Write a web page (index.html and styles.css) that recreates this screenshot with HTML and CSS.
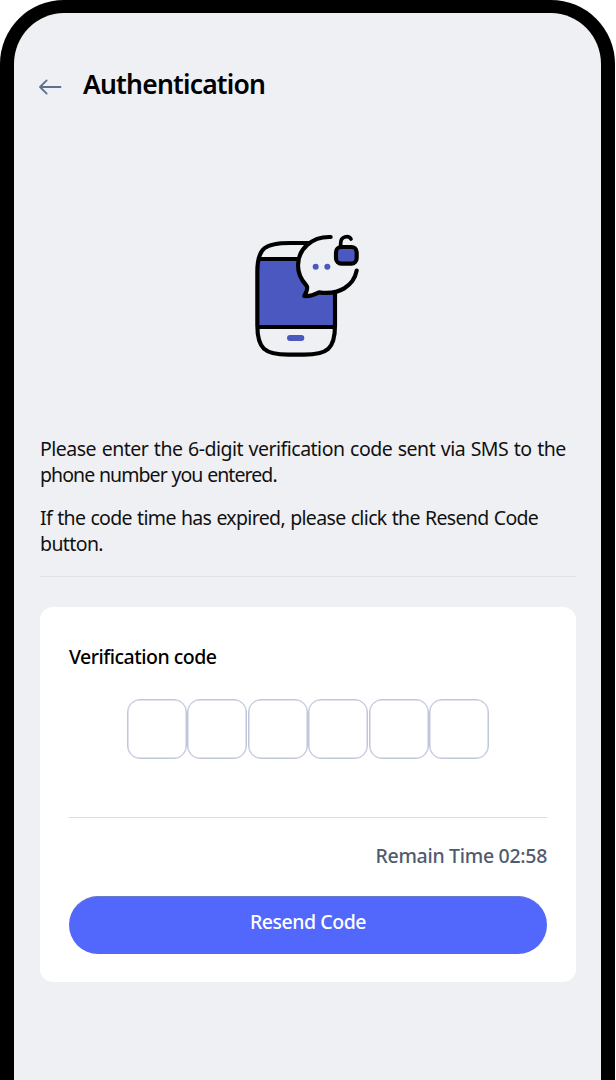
FILE: index.html
```html
<!DOCTYPE html>
<html lang="en">
<head>
<meta charset="utf-8">
<title>Authentication</title>
<link rel="stylesheet" href="styles.css">
</head>
<body>
<main class="phone">
  <header class="header">
    <svg class="back" viewBox="0 0 24 18" fill="none"><path d="M22.5 9H2M8.7 2.4L2 9l6.7 6.6"/></svg>
    <h1 class="title">Authentication</h1>
  </header>
  <svg class="art" viewBox="0 0 420 450" fill="none">
    <path class="screen" d="M52 117H286V321H52z"/>
    <path class="line" d="M212 69H150C76 69 52 82 52 156V316C52 386 74 404 145 404H192C263 404 285 386 285 316V214M58 117H180M56 321H281"/>
    <path class="bubble" d="M272 51C215 49 174 88 174 136C174 164 185 181 198 195C208 206 197 217 193 228C209 230 223 224 237 217C297 226 341 198 350 152L350 100L290 51Z"/>
    <path class="line" d="M272 51C215 49 174 88 174 136C174 164 185 181 198 195C208 206 197 217 193 228C209 230 223 224 237 217C297 226 341 198 350 152"/>
    <rect class="lock" x="288" y="81" width="62" height="50" rx="16"/>
    <path class="shackle" d="M302 80V70C302 49 325 45 333 57"/>
    <circle class="dot" cx="227" cy="140" r="9"/>
    <circle class="dot" cx="262" cy="140" r="9"/>
    <rect class="dot" x="141" y="345" width="52" height="18" rx="9"/>
  </svg>
  <section class="intro">
    <p class="para"><span class="wide">Please enter the 6-digit verification code sent via SMS to the</span><br><span class="tight">phone number you entered.</span></p>
    <p class="para"><span class="even">If the code time has expired, please click the Resend Code</span><br>button.</p>
  </section>
  <section class="card">
    <h2 class="label">Verification code</h2>
    <div class="code"><i class="cell"></i><i class="cell"></i><i class="cell"></i><i class="cell"></i><i class="cell"></i><i class="cell"></i></div>
    <div class="remain"><span>Remain Time 02:58</span></div>
    <button class="resend">Resend Code</button>
  </section>
</main>
</body>
</html>
```
FILE: styles.css
```css
* { box-sizing: border-box; }
body { margin: 0; background: #fff; height: 1080px; overflow: hidden; font-family: "Noto Sans", sans-serif; }
.phone {
  width: 615px; height: 1080px;
  border: 14px solid #000; border-top-width: 13px; border-bottom: 0; border-radius: 64px 64px 0 0;
  background: #eff0f4;
  padding: 51px 25px 0 26px;
  display: flex; flex-direction: column;
}
.header { display: flex; align-items: center; height: 40px; }
.back { width: 24px; height: 18px; margin: 6px 21px 0 -2px; stroke: #5f6f8c; stroke-width: 1.8; stroke-linecap: round; stroke-linejoin: round; }
.title { margin: 0; font-size: 26.5px; line-height: 40px; font-weight: 600; letter-spacing: -0.8px; color: #000; white-space: nowrap; }
.art { width: 140px; height: 150px; flex: none; margin: 116px 0 0 200px; }
.screen, .dot { fill: #4b58c0; }
.line { stroke: #000; stroke-width: 12.5; stroke-linecap: round; stroke-linejoin: round; }
.bubble { fill: #eff0f4; }
.lock { fill: #4b58c0; stroke: #000; stroke-width: 12.5; }
.shackle { stroke: #000; stroke-width: 11; stroke-linecap: round; }
.intro { margin-top: 66px; height: 141px; flex: none; border-bottom: 1px solid #e2e3e7; color: #111; display: flex; flex-direction: column; gap: 17px; }
.para { margin: 0; font-size: 19.5px; line-height: 26px; letter-spacing: -0.6px; white-space: nowrap; }
.wide { letter-spacing: -0.5px; word-spacing: 0.98px; }
.tight { letter-spacing: -0.92px; word-spacing: 0.5px; }
.even { letter-spacing: -0.65px; word-spacing: 0.7px; }
.card { margin-top: 30px; width: 536px; height: 375px; flex: none; background: #fff; border-radius: 13px; padding: 37px 29px 0; display: flex; flex-direction: column; }
.label { margin: 0; font-size: 19.5px; line-height: 26px; font-weight: 500; letter-spacing: -0.5px; color: #000; align-self: flex-start; }
.code { display: flex; justify-content: center; gap: 0.6px; margin-top: 29px; }
.cell { width: 60px; height: 60px; border: 1px solid #c1c7da; box-shadow: inset 0 0 0 0.5px #c1c7da; border-radius: 13px; }
.remain { margin-top: 58px; height: 79px; border-top: 1px solid #d9dce6; padding-top: 25px; text-align: right; font-size: 19.5px; line-height: 26px; letter-spacing: -0.3px; color: #4f5b71; font-weight: 500; }
.resend { height: 58px; flex: none; border: 0; border-top: 1px solid #6878cf; border-radius: 29px; background: #5267fb; color: #fff; font: 500 19.5px/26px "Noto Sans", sans-serif; letter-spacing: -0.45px; padding: 0 0 8px; }
```
